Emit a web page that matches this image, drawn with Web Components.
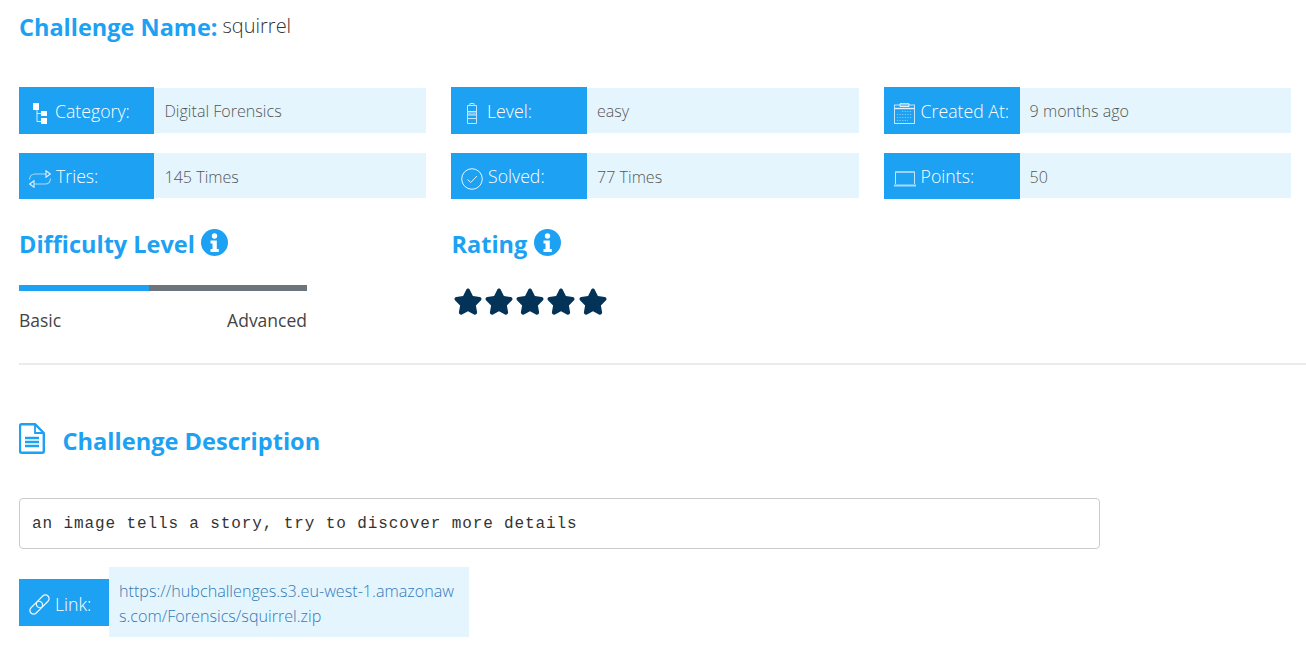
<!DOCTYPE html>
<html>
<head>
<meta charset="utf-8">
<title>Challenge</title>
<style>
  html, body { margin: 0; background: #fff; }
  body { font-family: "Open Sans", "Liberation Sans", sans-serif; color: #444; height: 648px; overflow: hidden; }
</style>
</head>
<body>
<challenge-page></challenge-page>

<script>
const icons = {
    category: `<svg width="14" height="21" viewBox="0 0 14 21"><path d="M4 7v11.500h4M4 10.500h4" fill="none" stroke="#d6eefe" stroke-width="1"/><rect x="0" y="0" width="6" height="7" fill="#fff"/><rect x="8" y="8" width="6" height="5" fill="#fff"/><rect x="8" y="15" width="6" height="6" fill="#fff"/></svg>`,
    tries: `<svg width="22" height="18" viewBox="0 0 22 18" fill="none" stroke="#a9dbfc" stroke-width="1.100"><path d="M.6 9.500C.6 6 3 4 6 4h11"/><path d="M17 .8l4.300 3.200L17 7.200z" stroke="#dff2fe"/><path d="M21.400 8.500C21.400 12 19 14 16 14H5"/><path d="M5 10.800L.7 14 5 17.200z" stroke="#dff2fe"/></svg>`,
    level: `<svg width="12" height="21" viewBox="0 0 12 21" fill="none" stroke="#c4e6fd" stroke-width="1"><rect x="1.500" y="8.500" width="9" height="3.500" fill="#6cc0f7" stroke="none"/><path d="M4 .5h4v2M4 .5v2M1.500 2.500h9v18h-9zM1.500 8.500h9M1.500 12h9M1.500 15.500h9"/></svg>`,
    solved: `<svg width="22" height="22" viewBox="0 0 22 22" fill="none" stroke="#e6f5ff" stroke-width="1"><circle cx="11" cy="11" r="10.300"/><path d="M6.500 11.500l3.300 3 6.200-6.500"/></svg>`,
    created: `<svg width="21" height="21" viewBox="0 0 21 21" fill="none" stroke="#c4e6fd" stroke-width="1"><rect x=".5" y="2" width="20" height="18.500"/><path d="M.5 5.500h20" stroke="#dff2fe" stroke-width="1.400"/><path d="M6 .7h9v2.800H6z" stroke="#f2faff" stroke-width=".9"/><path d="M8 8.500h10.500M3 11.500h15.500M3 14.500h15.500M3 17.500h11" stroke="#7fc9f9" stroke-dasharray="1.200 1.400" stroke-width="1.200"/></svg>`,
    points: `<svg width="22" height="16" viewBox="0 0 22 16" fill="none" stroke="#c4e6fd" stroke-width="1"><path d="M1.500 13V1h19v12" /><path d="M1 1h20" stroke="#a9dbfc" stroke-width="1.400"/><path d="M0 14.500h22" stroke="#a9dbfc" stroke-width="2"/></svg>`,
    link: `<svg width="21" height="21" viewBox="0 0 21 21" fill="none" stroke="#eaf6ff" stroke-width="1.300"><rect x="-7.500" y="-3.700" width="15" height="7.400" rx="3.700" transform="translate(13.700 7.300) rotate(-45)"/><rect x="-7.500" y="-3.700" width="15" height="7.400" rx="3.700" transform="translate(7.300 13.700) rotate(-45)"/></svg>`,
    info: `<svg width="27" height="27" viewBox="0 0 27 27"><circle cx="13.500" cy="13.500" r="13.500" fill="#1da1f2"/><circle cx="13.500" cy="7" r="2.700" fill="#fff"/><path d="M9.500 11.500h6.300v8.500h2v3h-8.300v-3h2v-5.500h-2z" fill="#fff"/></svg>`,
    doc: `<svg width="26" height="31" viewBox="0 0 26 31" fill="none" stroke="#1da1f2" stroke-width="2.400"><path d="M2.500 1.200h13.500l8.800 8.800v18.300a1.500 1.500 0 0 1-1.500 1.500h-20.800a1.500 1.500 0 0 1-1.500-1.500v-25.600a1.500 1.500 0 0 1 1.500-1.500z" stroke-linejoin="round"/><path d="M16 1.200v8.800h8.800" stroke-width="1.800"/><path d="M6 15h14M6 19h14M6 23h14"/></svg>`,
};

const star = `<svg width="30" height="28" viewBox="0 0 30 28"><path d="M15 1.500c.9 0 1.500.6 1.900 1.400l3 6.200 6.800 1c1.800.3 2.400 2.300 1.100 3.500l-4.900 4.800 1.200 6.800c.3 1.800-1.600 3.100-3.100 2.300L15 24.300l-6 3.200c-1.500.8-3.400-.5-3.100-2.300l1.200-6.800-4.900-4.800c-1.300-1.200-.7-3.200 1.100-3.500l6.800-1 3-6.200c.4-.8 1-1.400 1.900-1.400z" fill="#033457"/></svg>`;

// every element below follows the same shape: styles + markup in an open shadow root
function defineEl(name, styles, markup) {
    customElements.define(name, class extends HTMLElement {
        connectedCallback() {
            if (this.shadowRoot) return;
            const shadow = this.attachShadow({ mode: 'open' });
            shadow.innerHTML = `<style>${styles}</style>` + markup(this);
        }
    });
}

defineEl('info-cell', `
    :host { display: flex; align-items: center; height: 47px; font-weight: 300; font-size: 16.100px; }
    .label { box-sizing: border-box; flex: 0 0 var(--label-w, 136px); height: var(--label-h, 47px); align-self: flex-end; background: #1da1f2; color: #fff; display: flex; align-items: center; padding-left: var(--pad, 10px); gap: var(--icon-gap, 3px); font-size: 17.700px; white-space: nowrap; }
    .icon { display: flex; margin-top: var(--icon-top, 6px); }
    .value { box-sizing: border-box; flex: 1; height: 45px; line-height: var(--value-lh, 47px); background: #e5f5fe; color: #555; padding-left: var(--value-pad, 10px); white-space: nowrap; }
`, el => `<div class="label"><span class="icon">${icons[el.getAttribute('icon')]}</span><span>${el.getAttribute('label')}</span></div><div class="value"><slot></slot></div>`);

defineEl('section-title', `
    :host { display: flex; align-items: flex-start; gap: var(--title-gap, 6px); color: #1da1f2; font-weight: 700; font-size: 23.500px; height: 30px; line-height: 30px; }
    .icon { display: flex; }
`, () => `<slot></slot><span class="icon">${icons.info}</span>`);

defineEl('difficulty-bar', `
    :host { display: block; width: 288px; color: #444; font-size: 17.500px; font-weight: 400; }
    .bar { display: flex; height: 6px; background: #6c757d; }
    .fill { width: 130px; background: #1da1f2; }
    .ends { display: flex; justify-content: space-between; margin-top: 17px; line-height: 24px; }
`, () => `<div class="bar"><div class="fill"></div></div><div class="ends"><span>Basic</span><span>Advanced</span></div>`);

defineEl('star-rating', `
    :host { display: flex; gap: 1.250px; }
    svg { display: block; }
`, () => star.repeat(5));

defineEl('link-row', `
    :host { display: flex; align-items: center; font-weight: 300; font-size: 16.150px; }
    .label { box-sizing: border-box; width: 90px; height: 47px; padding: 3px 0 0 10px; background: #1da1f2; color: #fff; display: flex; align-items: center; gap: 5px; font-size: 17.700px; }
    .icon { display: flex; margin-top: 2px; }
    .url { box-sizing: border-box; width: 360px; height: 70px; padding: 12px 10px 0; background: #e5f5fe; color: #337ab7; line-height: 25px; word-break: break-all; }
`, () => `<div class="label"><span class="icon">${icons.link}</span><span>Link:</span></div><div class="url"><slot></slot></div>`);

defineEl('challenge-page', `
    :host { display: block; padding-left: 19px; }
    h1 { margin: 0; height: 87px; box-sizing: border-box; padding-top: 9px; font-size: 23.500px; line-height: 36px; font-weight: 700; color: #1da1f2; display: flex; }
    h1 span { margin-left: 5px; font-size: 20px; font-weight: 300; color: #333; line-height: 34px; }
    .grid { display: grid; grid-template-columns: 407px 407.600px 407px; column-gap: 25px; row-gap: 18px; }
    .second { --label-h: 46px; --value-lh: 49px; }
    .ratings { display: flex; margin-top: 30px; height: 134px; border-bottom: 2px solid #e9ecef; }
    .ratings > div { width: 432.500px; }
    .ratings difficulty-bar { margin-top: 26px; }
    star-rating { margin-top: 27.500px; margin-left: 1px; }
    .desc-title { display: flex; gap: 17.500px; margin-top: 59px; height: 34px; line-height: 34px; color: #1da1f2; font-size: 23.600px; font-weight: 700; }
    .desc-title svg { display: block; margin-top: -1px; }
    .story { box-sizing: border-box; width: 1081px; height: 51px; margin-top: 40px; padding: 0 12px; border: 1px solid #ccc; border-radius: 4px; font: 16px/51px "Liberation Mono", monospace; letter-spacing: .89px; color: #333; }
    link-row { margin-top: 18px; }
`, () => `
    <h1>Challenge Name:<span>squirrel</span></h1>
    <div class="grid">
        <info-cell icon="category" label="Category:" style="--label-w:135px;--value-pad:10.500px;--pad:14px;--icon-gap:8px">Digital Forensics</info-cell>
        <info-cell icon="level" label="Level:" style="--pad:15px;--icon-gap:9px">easy</info-cell>
        <info-cell icon="created" label="Created At:" style="--pad:10px;--icon-gap:6px">9 months ago</info-cell>
        <info-cell class="second" icon="tries" label="Tries:" style="--label-w:135px;--value-pad:10.500px;--pad:10px;--icon-gap:5px">145 Times</info-cell>
        <info-cell class="second" icon="solved" label="Solved:" style="--pad:10px;--icon-gap:5px;--icon-top:5px">77 Times</info-cell>
        <info-cell class="second" icon="points" label="Points:" style="--pad:10px;--icon-gap:5px;--icon-top:5px">50</info-cell>
    </div>
    <div class="ratings">
        <div>
            <section-title>Difficulty Level</section-title>
            <difficulty-bar></difficulty-bar>
        </div>
        <div>
            <section-title style="--title-gap:7px">Rating</section-title>
            <star-rating></star-rating>
        </div>
    </div>
    <div class="desc-title">${icons.doc}<span>Challenge Description</span></div>
    <div class="story">an image tells a story, try to discover more details</div>
    <link-row>https://hubchallenges.s3.eu-west-1.amazonaws.com/Forensics/squirrel.zip</link-row>
`);
</script>
</body>
</html>
